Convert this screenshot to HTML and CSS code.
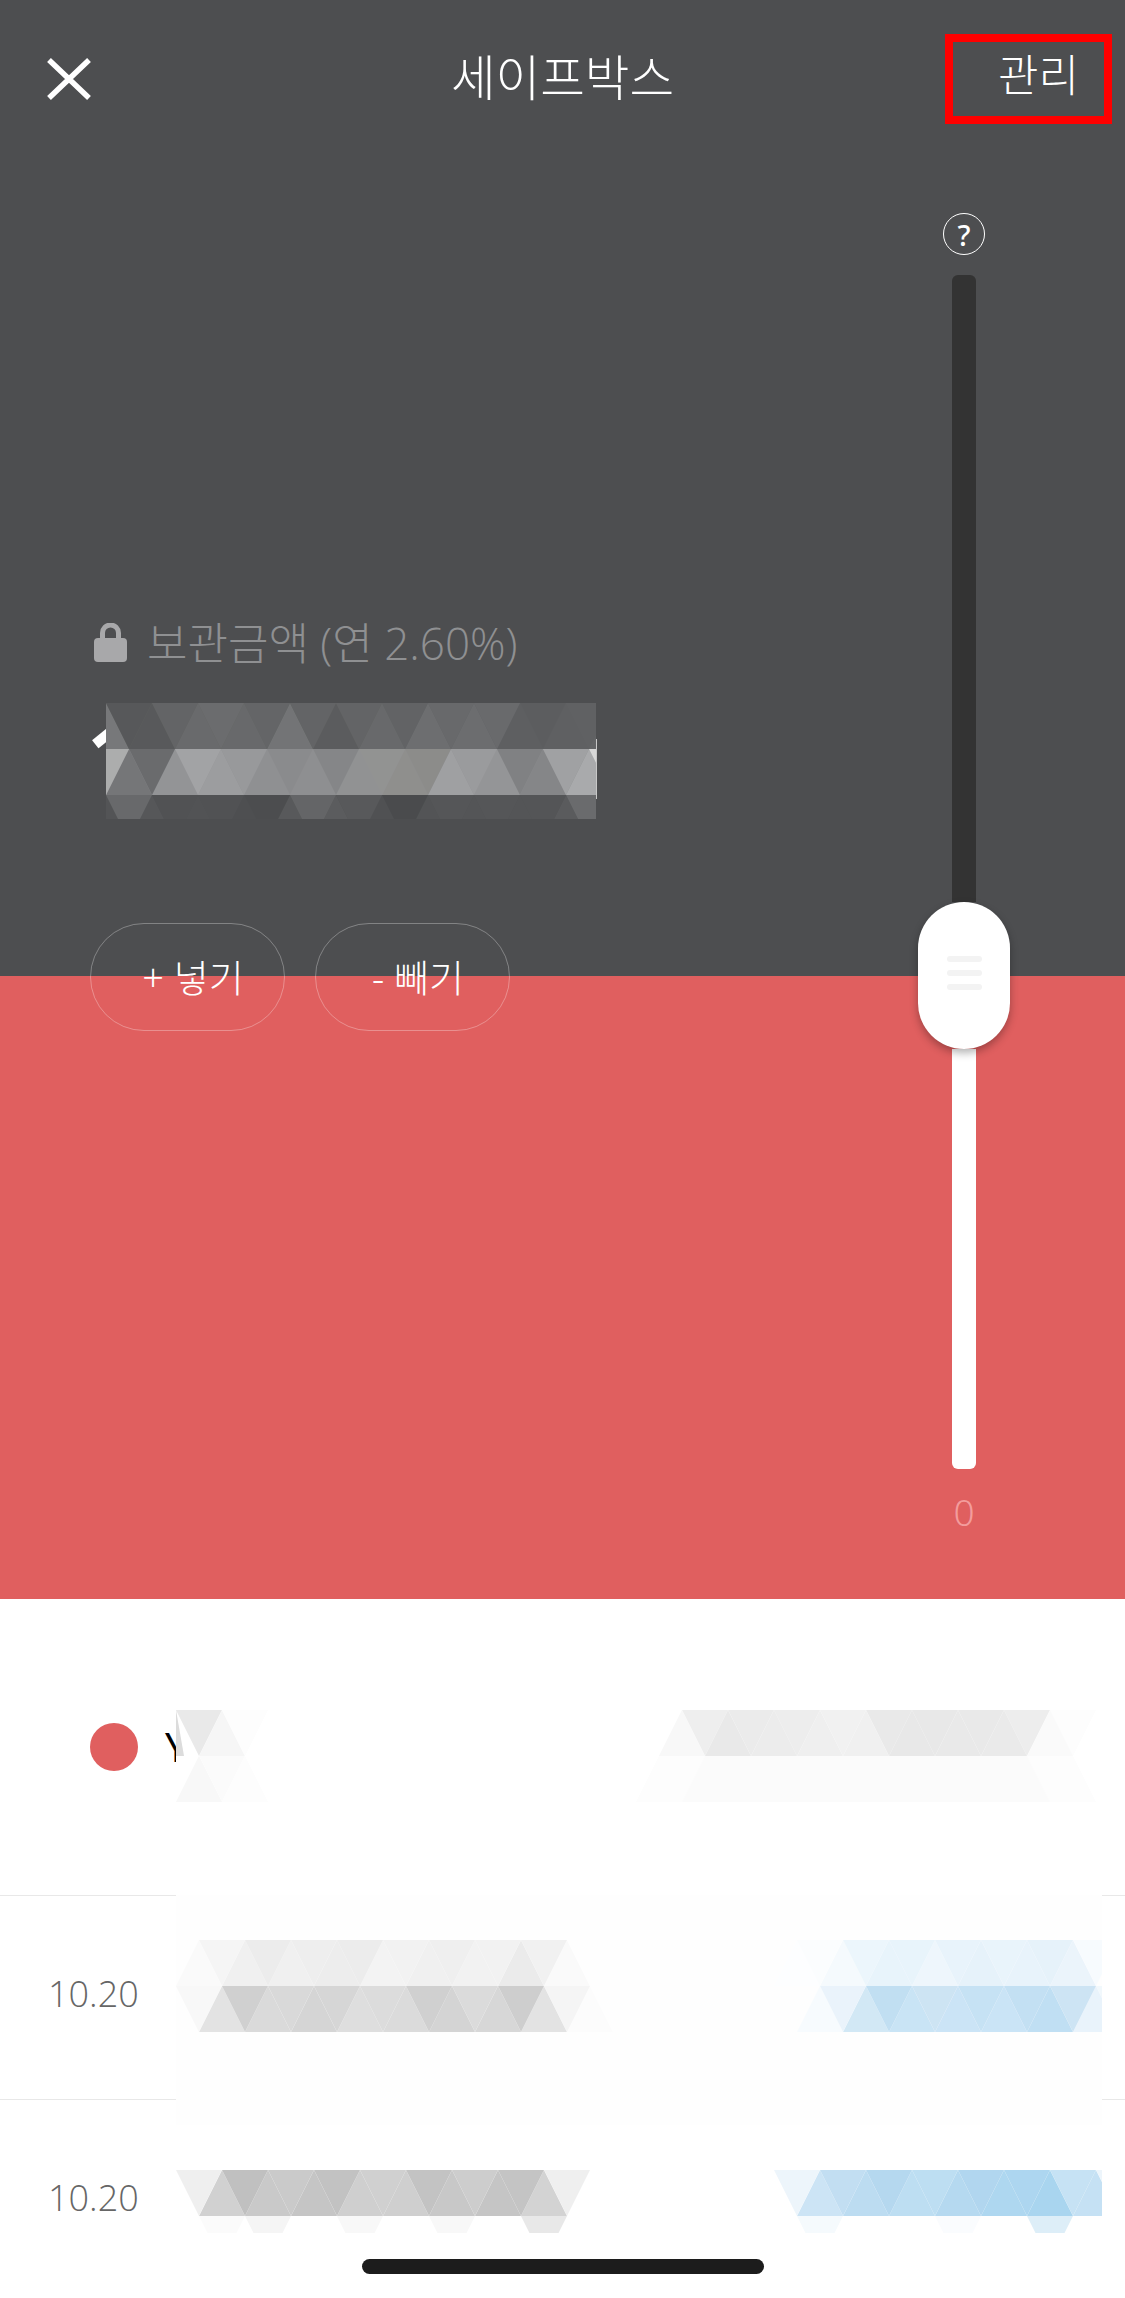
FILE: index.html
```html
<!DOCTYPE html>
<html lang="ko">
<head>
<meta charset="utf-8">
<title>세이프박스</title>
<link rel="stylesheet" href="styles.css">
</head>
<body>
<div class="page">
  <section class="hero">
    <header class="topbar">
      <svg class="close" viewBox="0 0 44 42" aria-label="닫기"><path d="M2 2 42 40M42 2 2 40"/></svg>
      <h1 class="title">세이프박스</h1>
      <a class="manage">관리</a>
    </header>

    <div class="balance">
      <div class="label">
        <svg class="lock" viewBox="0 0 33 39"><path class="lock-arc" d="M8.5 17V10a8 8 0 0 1 16 0v7"/><rect class="lock-body" y="15" width="33" height="24" rx="4"/></svg>
        <span class="label-text">보관금액 (연 2.60%)</span>
      </div>
      <div class="amount">
        <span class="amount-text">1</span>
        <i class="sliver"></i>
        <svg class="mosaic" viewBox="0 0 490 116">
          <rect width="490" height="46" fill="#636466"/>
          <rect y="46" width="490" height="46" fill="#929395"/>
          <rect y="92" width="490" height="24" fill="#535456"/>
          <g>
            <path fill="#77787a" d="M-23 46h46L0 0z"/><path fill="#58595b" d="M23 46h46L46 0z"/><path fill="#696a6c" d="M69 46h46L92 0z"/><path fill="#68696b" d="M115 46h46L138 0z"/><path fill="#737476" d="M161 46h46L184 0z"/><path fill="#5b5c5e" d="M207 46h46L230 0z"/><path fill="#68696b" d="M253 46h46L276 0z"/><path fill="#6d6e70" d="M299 46h46L322 0z"/><path fill="#6c6d6f" d="M345 46h46L368 0z"/><path fill="#5e5f61" d="M391 46h46L414 0z"/><path fill="#5f6062" d="M437 46h46L460 0z"/>
            <path fill="#57585a" d="M0 0h46L23 46z"/><path fill="#636466" d="M46 0h46L69 46z"/><path fill="#6b6c6e" d="M92 0h46l-23 46z"/><path fill="#646567" d="M138 0h46l-23 46z"/><path fill="#636466" d="M184 0h46l-23 46z"/><path fill="#636466" d="M230 0h46l-23 46z"/><path fill="#626365" d="M276 0h46l-23 46z"/><path fill="#68696b" d="M322 0h46l-23 46z"/><path fill="#696a6c" d="M368 0h46l-23 46z"/><path fill="#5c5d5f" d="M414 0h46l-23 46z"/><path fill="#606163" d="M460 0h46l-23 46z"/>
          </g>
          <g transform="translate(0 46)">
            <path fill="#757678" d="M0 46h46L23 0z"/><path fill="#939496" d="M46 46h46L69 0z"/><path fill="#9c9d9f" d="M92 46h46l-23-46z"/><path fill="#8f9092" d="M138 46h46l-23-46z"/><path fill="#8e8f91" d="M184 46h46l-23-46z"/><path fill="#919293" d="M230 46h46l-23-46z"/><path fill="#8f8f8d" d="M276 46h46l-23-46z"/><path fill="#9fa0a2" d="M322 46h46l-23-46z"/><path fill="#949597" d="M368 46h46l-23-46z"/><path fill="#858688" d="M414 46h46l-23-46z"/><path fill="#a9aaac" d="M460 46h46l-23-46z"/>
            <path fill="#acadad" d="M-23 0h46L0 46z"/><path fill="#6a6b6d" d="M23 0h46L46 46z"/><path fill="#a2a3a5" d="M69 0h46L92 46z"/><path fill="#98999b" d="M115 0h46l-23 46z"/><path fill="#8a8b8d" d="M161 0h46l-23 46z"/><path fill="#858688" d="M207 0h46l-23 46z"/><path fill="#929392" d="M253 0h46l-23 46z"/><path fill="#8c8c8a" d="M299 0h46l-23 46z"/><path fill="#9a9b9d" d="M345 0h46l-23 46z"/><path fill="#808183" d="M391 0h46l-23 46z"/><path fill="#a0a1a3" d="M437 0h46l-23 46z"/><path fill="#d8d8d8" d="M483 0h46l-23 46z"/>
          </g>
          <g transform="translate(0 92)">
            <path fill="#565759" d="M23 46h46L46 0z"/><path fill="#525355" d="M69 46h46L92 0z"/><path fill="#4e4f51" d="M115 46h46l-23-46z"/><path fill="#58595b" d="M161 46h46l-23-46z"/><path fill="#5b5c5e" d="M207 46h46l-23-46z"/><path fill="#505153" d="M253 46h46l-23-46z"/><path fill="#535456" d="M299 46h46l-23-46z"/><path fill="#545557" d="M345 46h46l-23-46z"/><path fill="#545557" d="M391 46h46l-23-46z"/><path fill="#5a5b5d" d="M437 46h46l-23-46z"/>
            <path fill="#68696b" d="M0 0h46L23 46z"/><path fill="#515254" d="M46 0h46L69 46z"/><path fill="#515254" d="M92 0h46l-23 46z"/><path fill="#4c4d4f" d="M138 0h46l-23 46z"/><path fill="#646567" d="M184 0h46l-23 46z"/><path fill="#58595b" d="M230 0h46l-23 46z"/><path fill="#4a4b4d" d="M276 0h46l-23 46z"/><path fill="#555658" d="M322 0h46l-23 46z"/><path fill="#555658" d="M368 0h46l-23 46z"/><path fill="#545557" d="M414 0h46l-23 46z"/><path fill="#6a6b6d" d="M460 0h46l-23 46z"/>
          </g>
        </svg>
      </div>
      <div class="actions">
        <button class="action">+ 넣기</button>
        <button class="action">- 빼기</button>
      </div>
    </div>

    <aside class="slider">
      <span class="help">?</span>
      <div class="track-dark"></div>
      <div class="thumb"><i></i><i></i><i></i></div>
      <div class="track-light"></div>
      <span class="slider-min">0</span>
    </aside>
  </section>

  <section class="list">
    <div class="row row-head"><span class="dot"></span><span class="head-text">Y</span></div>
    <div class="row"><span class="date">10.20</span></div>
    <div class="row"><span class="date">10.20</span></div>

    <svg class="censor" viewBox="0 0 926 523">
      <rect width="926" height="523" fill="#fff"/>
      <rect y="185" width="926" height="230" fill="#fefefe"/>
      <g>
        <path fill="#e9e9e9" d="M0 0h46L23 46z"/><path fill="#dcdcdc" d="M0 0v46h8z"/><path fill="#f6f6f6" d="M23 46h46L46 0z"/><path fill="#fdfdfd" d="M46 0h46L69 46z"/>
        <path fill="#eee" d="M506 0h46l-23 46z"/><path fill="#ebebeb" d="M552 0h46l-23 46z"/><path fill="#ededed" d="M598 0h46l-23 46z"/><path fill="#f1f1f1" d="M644 0h46l-23 46z"/><path fill="#e9e9e9" d="M690 0h46l-23 46z"/><path fill="#e8e8e8" d="M736 0h46l-23 46z"/><path fill="#e9e9e9" d="M782 0h46l-23 46z"/><path fill="#ededed" d="M828 0h46l-23 46z"/><path fill="#fdfdfd" d="M874 0h46l-23 46z"/>
        <path fill="#f8f8f8" d="M483 46h46L506 0z"/><path fill="#e9e9e9" d="M529 46h46L552 0z"/><path fill="#ececec" d="M575 46h46L598 0z"/><path fill="#efefef" d="M621 46h46L644 0z"/><path fill="#f0f0f0" d="M667 46h46L690 0z"/><path fill="#e8e8e8" d="M713 46h46L736 0z"/><path fill="#e9e9e9" d="M759 46h46L782 0z"/><path fill="#eaeaea" d="M805 46h46L828 0z"/><path fill="#fafafa" d="M851 46h46L874 0z"/>
      </g>
      <g transform="translate(0 46)">
        <path fill="#f8f8f8" d="M0 46h46L23 0z"/><path fill="#fbfbfb" d="M23 0h46L46 46z"/><path fill="#fdfdfd" d="M46 46h46L69 0z"/>
        <path fill="#fdfdfd" d="M483 0h414l23 46H460z"/><path fill="#fbfbfb" d="M529 0h322l23 46H506z"/>
      </g>
      <g transform="translate(0 230)">
        <path fill="#fafafa" d="M0 46h46L23 0z"/><path fill="#f0f0f0" d="M46 46h46L69 0z"/><path fill="#f0f0f0" d="M92 46h46l-23-46z"/><path fill="#ededed" d="M138 46h46l-23-46z"/><path fill="#f3f3f3" d="M184 46h46l-23-46z"/><path fill="#f0f0f0" d="M230 46h46l-23-46z"/><path fill="#f2f2f2" d="M276 46h46l-23-46z"/><path fill="#ebebeb" d="M322 46h46l-23-46z"/><path fill="#fafafa" d="M368 46h46l-23-46z"/>
        <path fill="#f5f5f5" d="M23 0h46L46 46z"/><path fill="#ececec" d="M69 0h46L92 46z"/><path fill="#eee" d="M115 0h46l-23 46z"/><path fill="#ececec" d="M161 0h46l-23 46z"/><path fill="#f2f2f2" d="M207 0h46l-23 46z"/><path fill="#efefef" d="M253 0h46l-23 46z"/><path fill="#f2f2f2" d="M299 0h46l-23 46z"/><path fill="#f1f1f1" d="M345 0h46l-23 46z"/><path fill="#fefefe" d="M391 0h46l-23 46z"/>
        <path fill="#fdfeff" d="M598 46h46l-23-46z"/><path fill="#f5fafd" d="M644 46h46l-23-46z"/><path fill="#e8f4fb" d="M690 46h46l-23-46z"/><path fill="#eef6fc" d="M736 46h46l-23-46z"/><path fill="#e6f2fa" d="M782 46h46l-23-46z"/><path fill="#e8f3fb" d="M828 46h46l-23-46z"/><path fill="#ebf4fb" d="M874 46h46l-23-46z"/>
        <path fill="#fbfdfe" d="M621 0h46l-23 46z"/><path fill="#ecf6fc" d="M667 0h46l-23 46z"/><path fill="#e8f4fb" d="M713 0h46l-23 46z"/><path fill="#e8f3fb" d="M759 0h46l-23 46z"/><path fill="#e9f4fb" d="M805 0h46l-23 46z"/><path fill="#e6f2fa" d="M851 0h46l-23 46z"/><path fill="#f7fbfe" d="M897 0h46l-23 46z"/>
      </g>
      <g transform="translate(0 276)">
        <path fill="#e3e3e3" d="M23 46h46L46 0z"/><path fill="#dadada" d="M69 46h46L92 0z"/><path fill="#d5d5d5" d="M115 46h46l-23-46z"/><path fill="#dedede" d="M161 46h46l-23-46z"/><path fill="#dbdbdb" d="M207 46h46l-23-46z"/><path fill="#d4d4d4" d="M253 46h46l-23-46z"/><path fill="#d7d7d7" d="M299 46h46l-23-46z"/><path fill="#e3e3e3" d="M345 46h46l-23-46z"/><path fill="#fcfcfc" d="M391 46h46l-23-46z"/>
        <path fill="#f8f8f8" d="M0 0h46L23 46z"/><path fill="#d0d0d0" d="M46 0h46L69 46z"/><path fill="#d9d9d9" d="M92 0h46l-23 46z"/><path fill="#d6d6d6" d="M138 0h46l-23 46z"/><path fill="#dcdcdc" d="M184 0h46l-23 46z"/><path fill="#d0d0d0" d="M230 0h46l-23 46z"/><path fill="#dbdbdb" d="M276 0h46l-23 46z"/><path fill="#cecece" d="M322 0h46l-23 46z"/><path fill="#f5f5f5" d="M368 0h46l-23 46z"/><path fill="#fefefe" d="M414 0h46l-23 46z"/>
        <path fill="#f7fbfe" d="M621 46h46l-23-46z"/><path fill="#d2e8f5" d="M667 46h46l-23-46z"/><path fill="#c9e4f5" d="M713 46h46l-23-46z"/><path fill="#cbe4f6" d="M759 46h46l-23-46z"/><path fill="#cae4f6" d="M805 46h46l-23-46z"/><path fill="#c0dff3" d="M851 46h46l-23-46z"/><path fill="#e9f3fb" d="M897 46h46l-23-46z"/>
        <path fill="#eaf3fb" d="M644 0h46l-23 46z"/><path fill="#c1dff2" d="M690 0h46l-23 46z"/><path fill="#cde4f3" d="M736 0h46l-23 46z"/><path fill="#c6e2f4" d="M782 0h46l-23 46z"/><path fill="#c3e0f3" d="M828 0h46l-23 46z"/><path fill="#cde4f4" d="M874 0h46l-23 46z"/><path fill="#f1f8fc" d="M920 0h46l-23 46z"/>
      </g>
      <g transform="translate(0 460)">
        <path fill="#d1d1d1" d="M23 46h46L46 0z"/><path fill="#c9c9c9" d="M69 46h46L92 0z"/><path fill="#c5c5c5" d="M115 46h46l-23-46z"/><path fill="#cfcfcf" d="M161 46h46l-23-46z"/><path fill="#cfcfcf" d="M207 46h46l-23-46z"/><path fill="#c8c8c8" d="M253 46h46l-23-46z"/><path fill="#c5c5c5" d="M299 46h46l-23-46z"/><path fill="#d3d3d3" d="M345 46h46l-23-46z"/>
        <path fill="#efefef" d="M0 0h46L23 46z"/><path fill="#c0c0c0" d="M46 0h46L69 46z"/><path fill="#cacaca" d="M92 0h46l-23 46z"/><path fill="#c2c2c2" d="M138 0h46l-23 46z"/><path fill="#d0d0d0" d="M184 0h46l-23 46z"/><path fill="#c3c3c3" d="M230 0h46l-23 46z"/><path fill="#cdcdcd" d="M276 0h46l-23 46z"/><path fill="#c4c4c4" d="M322 0h46l-23 46z"/><path fill="#efefef" d="M368 0h46l-23 46z"/>
        <path fill="#cce4f5" d="M621 46h46l-23-46z"/><path fill="#bcdcf1" d="M667 46h46l-23-46z"/><path fill="#bddef2" d="M713 46h46l-23-46z"/><path fill="#b5d9f0" d="M759 46h46l-23-46z"/><path fill="#aed7f0" d="M805 46h46l-23-46z"/><path fill="#a9d5ef" d="M851 46h46l-23-46z"/><path fill="#c5e1f4" d="M897 46h46l-23-46z"/>
        <path fill="#edf5fb" d="M598 0h46l-23 46z"/><path fill="#c2def2" d="M644 0h46l-23 46z"/><path fill="#b5d8ef" d="M690 0h46l-23 46z"/><path fill="#bddef2" d="M736 0h46l-23 46z"/><path fill="#b1d6ef" d="M782 0h46l-23 46z"/><path fill="#add6f0" d="M828 0h46l-23 46z"/><path fill="#c6e2f4" d="M874 0h46l-23 46z"/><path fill="#edf5fb" d="M920 0h46l-23 46z"/>
      </g>
      <g transform="translate(0 506)">
        <path fill="#fbfbfb" d="M23 0h46L46 46z"/><path fill="#f5f5f5" d="M69 0h46L92 46z"/><path fill="#f8f8f8" d="M161 0h46l-23 46z"/><path fill="#f8f8f8" d="M253 0h46l-23 46z"/><path fill="#e8e8e8" d="M345 0h46l-23 46z"/>
        <path fill="#f5fafd" d="M621 0h46l-23 46z"/><path fill="#fafcfe" d="M759 0h46l-23 46z"/><path fill="#ddeef8" d="M851 0h46l-23 46z"/>
      </g>
    </svg>
  </section>

  <div class="home-bar"></div>
</div>
</body>
</html>
```

FILE: styles.css
```css
* { box-sizing: border-box; }
html, body { margin: 0; padding: 0; }
body { font-family: "Noto Sans", "Noto Sans CJK KR", sans-serif; background: #fff; }

.page { position: relative; width: 1125px; height: 2298px; overflow: hidden; background: #fff; }

.hero { position: relative; height: 1599px; background: linear-gradient(#4d4e50 976px, #e05f5f 976px); color: #fff; }

.topbar { display: grid; grid-template-columns: 1fr auto 1fr; align-items: center; padding: 34px 13px 0; }
.close { width: 44px; height: 42px; margin: 0 0 0 34px; fill: none; stroke: #fff; stroke-width: 5.5; }
.title { margin: -5px 0 0; font-size: 48.5px; font-weight: 300; line-height: 60px; }
.manage { justify-self: end; width: 167px; height: 90px; border: 8px solid #f00; padding-right: 25px; font-size: 44px; font-weight: 300; line-height: 66px; text-align: right; }

.balance { margin: 499px 0 0 94px; }
.label { display: flex; align-items: center; gap: 20px; height: 39px; color: #8f9092; font-family: "Open Sans", "Noto Sans CJK KR", sans-serif; font-size: 44px; font-weight: 300; }
.label-text { margin-top: -3px; }
.lock { width: 33px; height: 39px; }
.lock-arc { fill: none; stroke: #a8a8aa; stroke-width: 5; }
.lock-body { fill: #a8a8aa; }

.amount { position: relative; width: 490px; height: 116px; margin: 41px 0 0 12px; }
.amount-text { position: absolute; left: -19px; top: 0; font-size: 87px; font-weight: 700; line-height: 100px; color: #fff; }
.sliver { position: absolute; left: 490px; top: 36px; width: 1px; height: 60px; background: #c8c8c8; }
.mosaic { position: absolute; inset: 0; display: block; width: 490px; height: 116px; }

.actions { display: flex; gap: 30px; margin: 104px 0 0 -4px; }
.action { width: 195px; height: 108px; padding: 0 0 3px 11px; border: 1px solid rgba(255,255,255,.3); border-radius: 54px; background: transparent; color: #fff; font-family: inherit; font-size: 38px; font-weight: 300; }

.slider { position: absolute; left: 918px; top: 213px; width: 92px; display: flex; flex-direction: column; align-items: center; }
.help { display: flex; align-items: center; justify-content: center; width: 42px; height: 42px; border: 1.5px solid #fff; border-radius: 50%; font-size: 29px; font-weight: 500; line-height: 1; }
.track-dark { width: 24px; height: 627px; margin-top: 20px; border-radius: 6px 6px 0 0; background: #333; }
.thumb { position: relative; display: flex; flex-direction: column; align-items: center; gap: 8px; width: 92px; height: 147px; padding-top: 54px; border-radius: 46px; background: #fff; box-shadow: 0 4px 8px rgba(0,0,0,.3); }
.thumb i { display: block; width: 35px; height: 6px; border-radius: 3px; background: #f3f3f3; }
.track-light { width: 24px; height: 420px; border-radius: 0 0 6px 6px; background: #fff; }
.slider-min { margin-top: 18px; color: #f39c9c; font-size: 37px; font-weight: 300; line-height: 50px; }

.list { position: relative; }
.row { display: flex; align-items: center; height: 204px; padding-left: 48px; border-bottom: 1px solid #e8e8e8; }
.row-head { height: 297px; padding-left: 90px; }
.dot { width: 48px; height: 48px; border-radius: 50%; background: #e05f5f; }
.head-text { margin-left: 27px; color: #000; font-size: 40px; line-height: 1; }
.date { margin-top: -8px; color: #666; font-family: "Open Sans", sans-serif; font-size: 36px; font-weight: 300; }
.censor { position: absolute; left: 176px; top: 111px; display: block; width: 926px; height: 523px; }

.home-bar { position: absolute; left: 362px; bottom: 24px; width: 402px; height: 15px; border-radius: 8px; background: #1c1c1c; }
```
